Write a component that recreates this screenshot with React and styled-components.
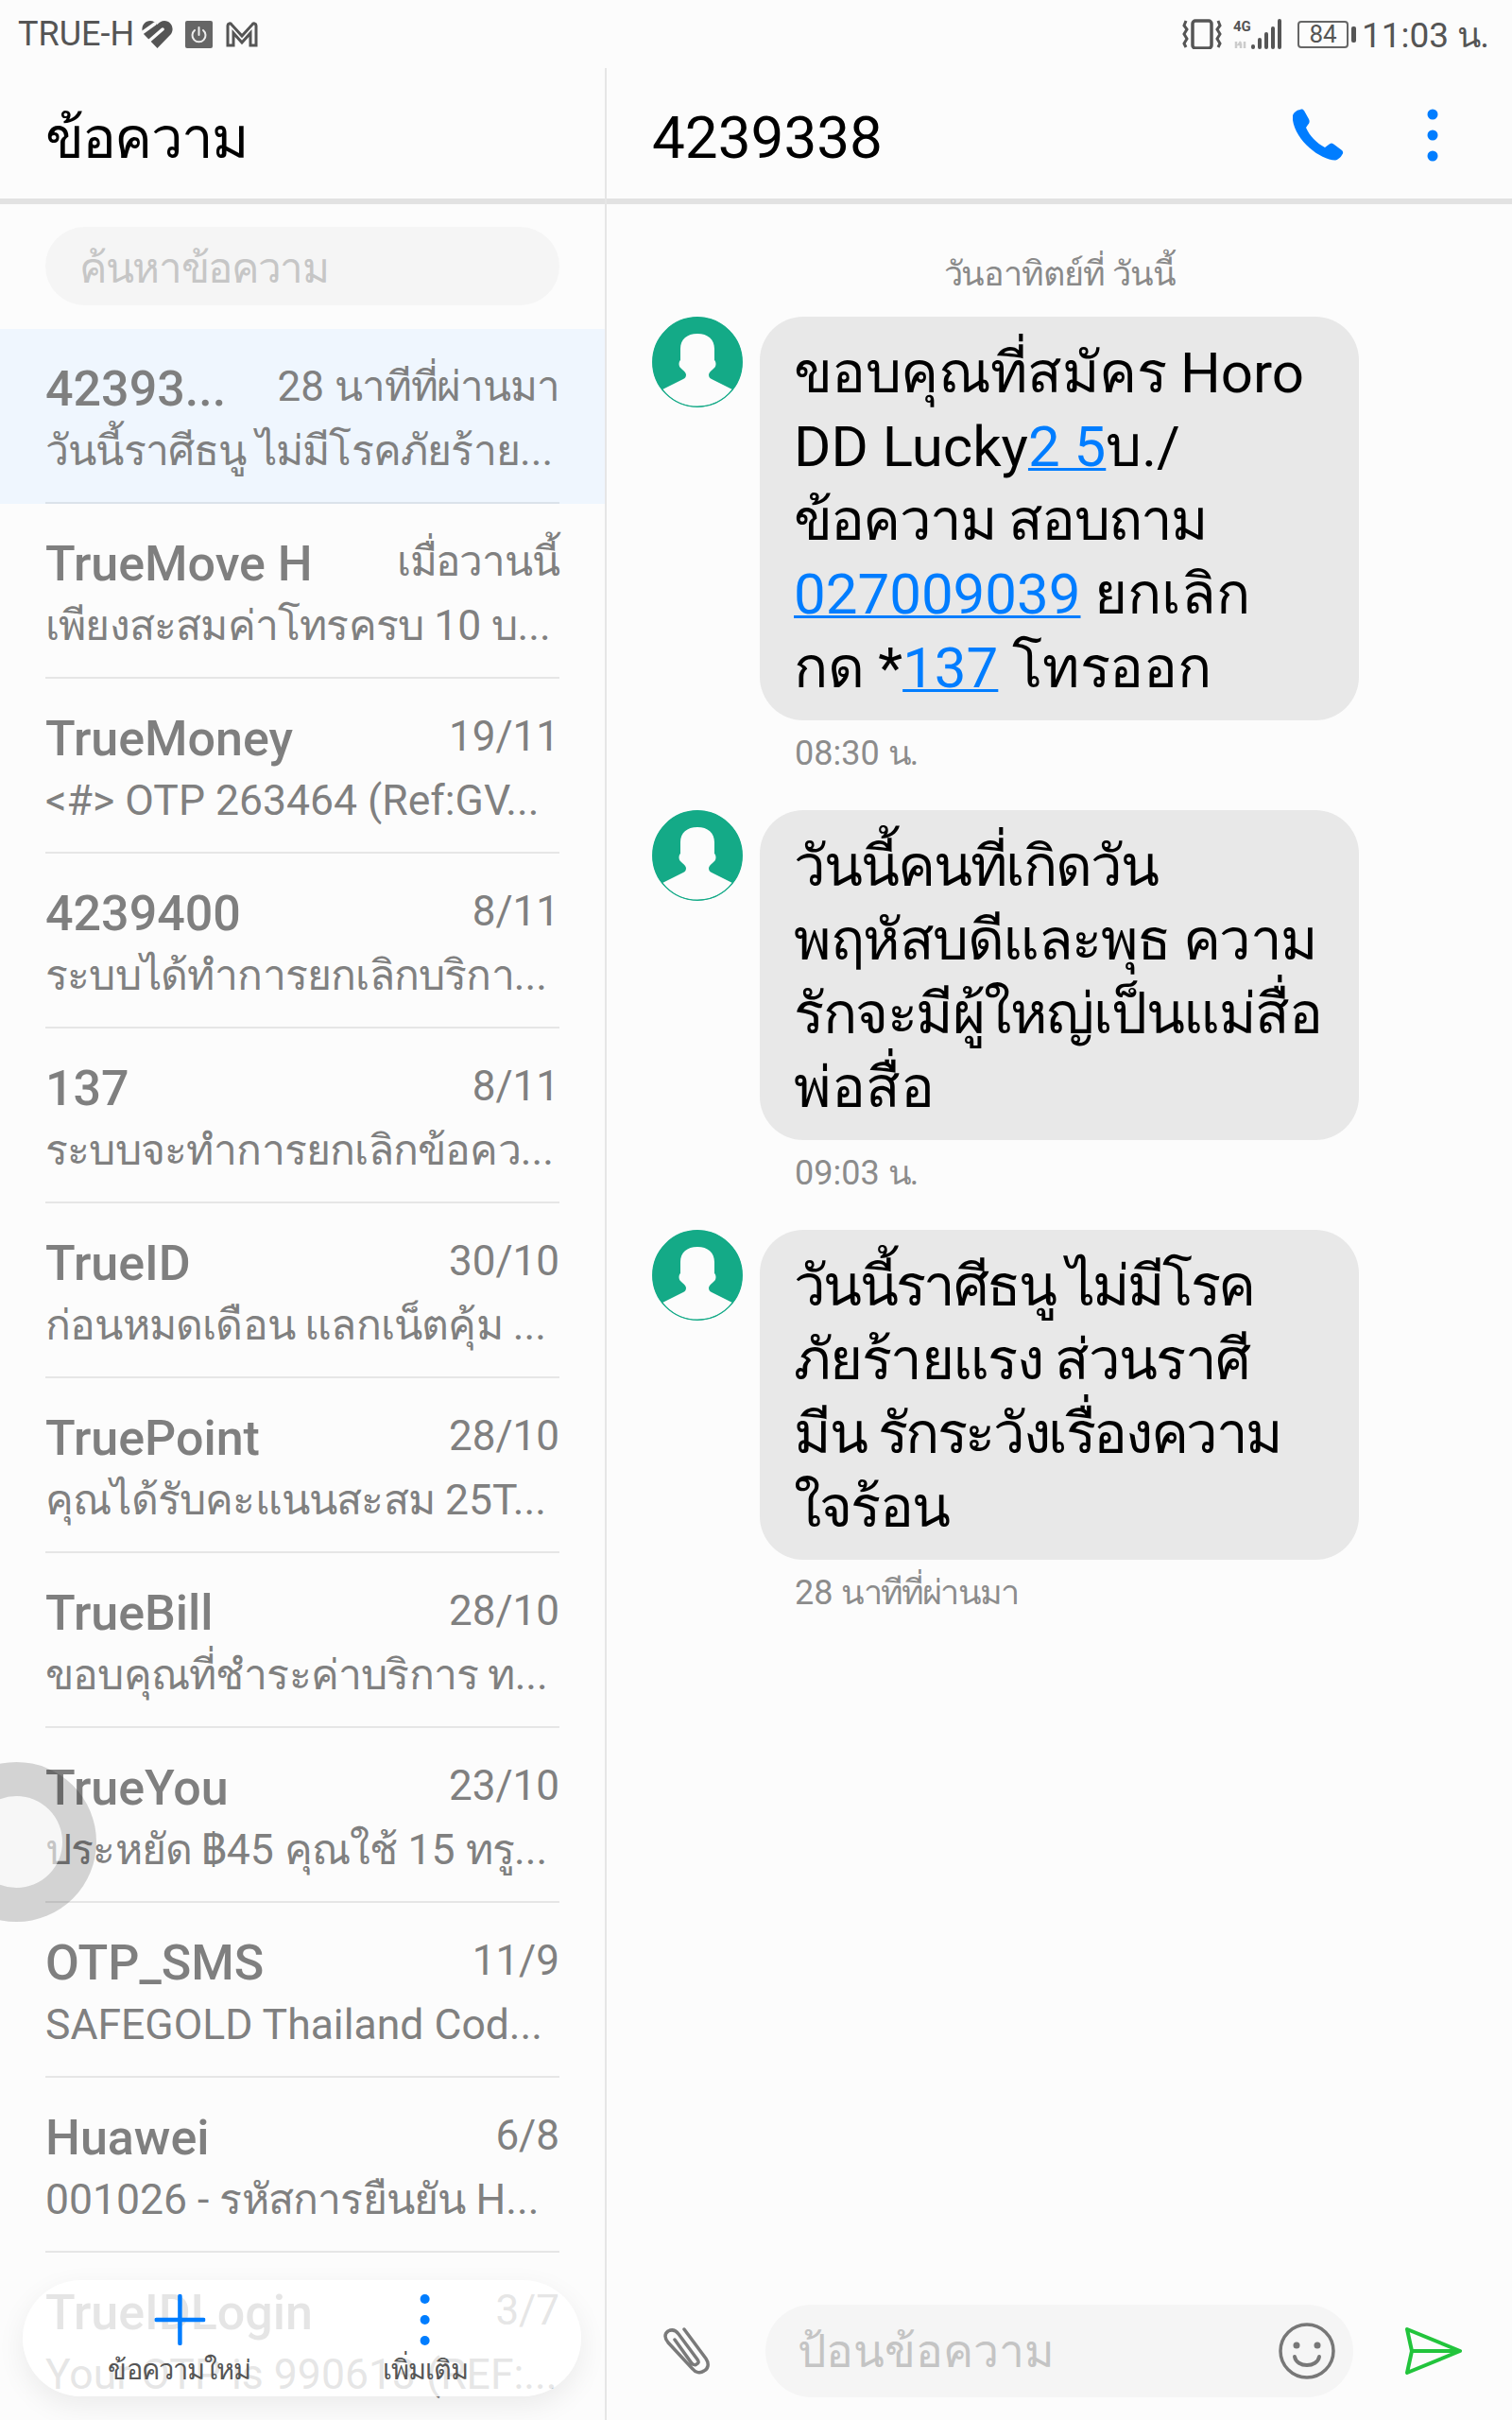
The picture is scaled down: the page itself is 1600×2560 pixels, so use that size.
import styled, { createGlobalStyle } from "styled-components";

const GlobalStyle = createGlobalStyle`
  html, body {
    margin: 0;
    padding: 0;
    background: #fcfcfc;
  }
  * {
    box-sizing: border-box;
  }
`;

const Page = styled.div`
  width: 1600px;
  height: 2560px;
  position: relative;
  overflow: hidden;
  display: flex;
  flex-direction: column;
  background: #fcfcfc;
  font-family: Roboto, "Noto Sans", sans-serif;
  --thai-track: -0.03em;
`;

/* the system Thai fallback runs wider than the phone's font */
const ThaiRun = styled.span`
  letter-spacing: var(--thai-track);
`;

const StatusBar = styled.div`
  height: 72px;
  flex: none;
  display: flex;
  align-items: center;
  justify-content: space-between;
  padding: 0 24px 0 19px;
  color: #555;
`;

const StatusGroup = styled.div`
  display: flex;
  align-items: center;
`;

const Carrier = styled.span`
  font-size: 36px;
  margin-right: 8px;
`;

const ClockText = styled.span`
  font-size: 37px;
  margin-left: 14px;
`;

const Battery = styled.div`
  width: 54px;
  height: 29px;
  border: 2px solid #666;
  border-radius: 4px;
  margin-left: 16px;
  font-size: 26px;
  line-height: 24px;
  text-align: center;
  position: relative;

  &::after {
    content: "";
    position: absolute;
    right: -10px;
    top: 4px;
    width: 5px;
    height: 17px;
    background: #555;
    border-radius: 2px;
  }
`;

const Body = styled.div`
  flex: 1;
  display: flex;
  min-height: 0;
`;

const Sidebar = styled.div`
  width: 642px;
  flex: none;
  border-right: 2px solid #e6e6e6;
  display: flex;
  flex-direction: column;
  position: relative;
  overflow: hidden;
`;

const PanelHeader = styled.div`
  height: 144px;
  flex: none;
  display: flex;
  align-items: center;
  justify-content: space-between;
  border-bottom: 6px solid #e2e2e2;
  padding: 4px 48px 0;
`;

const ThreadHeader = styled(PanelHeader)`
  padding: 4px 78px 0 48px;
`;

const PanelTitle = styled.div`
  font-size: ${(p) => p.$size || 60}px;
  color: #000;
  padding-top: 4px;
`;

const SearchWrap = styled.div`
  padding: 24px 48px 25px;
  flex: none;
`;

const SearchBox = styled.div`
  height: 83px;
  border-radius: 42px;
  background: #f5f5f5;
  color: #c6c6c6;
  font-size: 44px;
  line-height: 88px;
  padding-left: 36px;
`;

const Row = styled.div`
  height: 185px;
  flex: none;
  padding: 0 48px;
  background: ${(p) => (p.$active ? "#eff6fe" : "transparent")};
`;

const RowInner = styled.div`
  height: 100%;
  padding-top: 31px;
  border-bottom: 2px solid ${(p) => (p.$active ? "#dbe2ea" : "#e6e6e6")};
`;

const RowTop = styled.div`
  display: flex;
  align-items: flex-start;
  justify-content: space-between;
  height: 67px;
`;

const RowName = styled.span`
  font-size: 52px;
  font-weight: 500;
  line-height: 66px;
  color: #7f7f7f;
`;

const RowDate = styled.span`
  font-size: 44px;
  line-height: 60px;
  color: #808080;
  --thai-track: -0.025em;
`;

const RowPreview = styled.div`
  font-size: 44.5px;
  line-height: 62px;
  color: #808080;
  white-space: nowrap;
  --thai-track: -0.018em;
`;

const FloatBar = styled.div`
  position: absolute;
  left: 24px;
  top: 2340px;
  width: 591px;
  height: 123px;
  border-radius: 62px;
  background: rgba(255, 255, 255, 0.8);
  box-shadow: 0 10px 30px rgba(0, 0, 0, 0.07);
`;

const FloatAction = styled.div`
  position: absolute;
  top: 15px;
  left: ${(p) => p.$center - 24}px;
  transform: translateX(-50%);
  display: flex;
  flex-direction: column;
  align-items: center;
  gap: 3px;
  color: #555;
  font-size: 29px;
  white-space: nowrap;
`;

const Ball = styled.div`
  position: absolute;
  left: -67px;
  top: 1792px;
  width: 169px;
  height: 169px;
  border-radius: 50%;
  border: 36px solid rgba(0, 0, 0, 0.16);
  background: rgba(244, 244, 244, 0.6);
  background-clip: padding-box;
`;

const Thread = styled.div`
  flex: 1;
  display: flex;
  flex-direction: column;
  min-width: 0;
`;

const HeaderIcons = styled.div`
  display: flex;
  align-items: center;
  gap: 87px;
`;

const Messages = styled.div`
  flex: 1;
  padding: 48px 0 0 48px;
  display: flex;
  flex-direction: column;
`;

const DateLabel = styled.div`
  text-align: center;
  font-size: 36px;
  line-height: 46px;
  color: #8a8a8a;
  padding: 3px 48px 0 0;
  margin-bottom: 22px;
`;

const MessageRow = styled.div`
  display: flex;
  gap: 18px;
`;

const Bubble = styled.div`
  width: 634px;
  background: #e8e8e8;
  border-radius: 46px;
  padding: 21px 36px 16px;
  font-size: 60px;
  line-height: 78px;
  color: #000;
  white-space: nowrap;
`;

const BubbleLine = styled.div`
  --thai-track: ${(p) => p.$track || 0}em;
`;

const MessageLink = styled.span`
  color: #007dff;
  text-decoration: underline;
  text-decoration-thickness: 3px;
`;

const MessageTime = styled.div`
  margin-left: 151px;
  font-size: 36px;
  line-height: 46px;
  color: #8c8c8c;
  padding: 12px 0 37px;
  --thai-track: -0.05em;
`;

const Composer = styled.div`
  height: 98px;
  flex: none;
  display: flex;
  align-items: center;
  padding: 0 0 0 58px;
  margin-bottom: 24px;
`;

const InputPill = styled.div`
  width: 622px;
  height: 98px;
  border-radius: 49px;
  background: #f5f5f5;
  margin: 0 55px 0 58px;
  padding: 0 19px 0 34px;
  display: flex;
  align-items: center;
  justify-content: space-between;
  color: #c4c4c4;
  font-size: 48px;
  --thai-track: 0em;
`;

const threads = [
  { name: "42393...", date: "28 นาทีที่ผ่านมา", preview: "วันนี้ราศีธนู ไม่มีโรคภัยร้าย...", active: true },
  { name: "TrueMove H", date: "เมื่อวานนี้", preview: "เพียงสะสมค่าโทรครบ 10 บ..." },
  { name: "TrueMoney", date: "19/11", preview: "<#> OTP 263464 (Ref:GV..." },
  { name: "4239400", date: "8/11", preview: "ระบบได้ทำการยกเลิกบริกา..." },
  { name: "137", date: "8/11", preview: "ระบบจะทำการยกเลิกข้อคว..." },
  { name: "TrueID", date: "30/10", preview: "ก่อนหมดเดือน แลกเน็ตคุ้ม ..." },
  { name: "TruePoint", date: "28/10", preview: "คุณได้รับคะแนนสะสม 25T..." },
  { name: "TrueBill", date: "28/10", preview: "ขอบคุณที่ชำระค่าบริการ ท..." },
  { name: "TrueYou", date: "23/10", preview: "ประหยัด ฿45 คุณใช้ 15 ทรู..." },
  { name: "OTP_SMS", date: "11/9", preview: "SAFEGOLD Thailand Cod..." },
  { name: "Huawei", date: "6/8", preview: "001026 - รหัสการยืนยัน H..." },
  { name: "TrueIDLogin", date: "3/7", preview: "Your OTP is 990613 (REF:..." },
];

const Thai = ({ children }) =>
  children
    .split(/([\u0E00-\u0E7F]+(?:\s+[\u0E00-\u0E7F]+)*)/)
    .map((part, i) => (i % 2 ? <ThaiRun key={i}>{part}</ThaiRun> : part));

const Avatar = () => (
  <svg width="96" height="96" viewBox="0 0 96 96" style={{ flex: "none" }}>
    <circle cx="48" cy="48" r="47.5" fill="#14aa87" />
    <path
      d="M48 18C37 18 30 24 30 34V46C28 48 28 52 30 54C33 57 35 58 36 61C36 64 35 65 33 66L11 77A47 47 0 0 0 85 77L63 66C61 65 60 64 60 61C61 58 63 57 66 54C68 52 68 48 66 46V34C66 24 59 18 48 18Z"
      fill="#fcfcfc"
    />
    <circle cx="48" cy="48" r="47.2" fill="none" stroke="#14aa87" strokeWidth="1.4" />
  </svg>
);

const Message = ({ children, time }) => (
  <>
    <MessageRow>
      <Avatar />
      <Bubble>{children}</Bubble>
    </MessageRow>
    <MessageTime><Thai>{time}</Thai></MessageTime>
  </>
);

const App = () => (
  <Page>
    <GlobalStyle />
    <StatusBar>
      <StatusGroup>
        <Carrier>TRUE-H</Carrier>
        <svg width="33" height="29" viewBox="0 0 33 29">
          <path d="M16.500 29 2 14C-2 8 2 0 9 0 12 0 15 2 16.500 4 18 2 21 0 24 0 31 0 35 8 31 14Z" fill="#555" />
          <path d="M0 13 14 3M7 22 22 9" stroke="#fcfcfc" strokeWidth="3.500" strokeLinecap="round" />
        </svg>
        <svg width="29" height="29" viewBox="0 0 29 29" style={{ marginLeft: 13 }}>
          <rect width="29" height="29" rx="2" fill="#666" />
          <path d="M14.500 7v8" stroke="#eee" strokeWidth="2" strokeLinecap="round" />
          <path d="M10 10a7 7 0 1 0 9 0" stroke="#eee" strokeWidth="2" fill="none" strokeLinecap="round" />
        </svg>
        <svg width="34" height="27" viewBox="0 0 34 27" style={{ marginLeft: 14 }} fill="none" stroke="#555" strokeWidth="3">
          <path d="M2 25V4c0-2 3-3 4-1l11 12L28 3c1-2 4-1 4 1v21h-6V12l-9 10-9-10v13z" />
        </svg>
      </StatusGroup>
      <StatusGroup>
        <svg width="42" height="32" viewBox="0 0 42 32" fill="none" stroke="#555">
          <rect x="11" y="2" width="20" height="29" rx="3" strokeWidth="3.500" />
          <path d="M4 2l-2 5 3 4-3 5 3 5-3 5 2 4M38 2l2 5-3 4 3 5-3 5 3 5-2 4" strokeWidth="3" />
        </svg>
        <svg width="52" height="32" viewBox="0 0 52 32" style={{ marginLeft: 12 }}>
          <text x="0" y="13" fontSize="15" fontWeight="700" fill="#555" fontFamily="Roboto">4G</text>
          <path d="M3 31V24M8 24l-2 3h2v4M12 31v-7" stroke="#ccc" strokeWidth="2.500" fill="none" />
          <rect x="19" y="27" width="4" height="5" rx="2" fill="#555" />
          <rect x="26" y="20" width="4" height="12" rx="2" fill="#555" />
          <rect x="33" y="14" width="4" height="18" rx="2" fill="#555" />
          <rect x="40" y="8" width="4" height="24" rx="2" fill="#555" />
          <rect x="47" y="0" width="4" height="32" rx="2" fill="#555" />
        </svg>
        <Battery>84</Battery>
        <ClockText><Thai>11:03 น.</Thai></ClockText>
      </StatusGroup>
    </StatusBar>
    <Body>
      <Sidebar>
        <PanelHeader>
          <PanelTitle><Thai>ข้อความ</Thai></PanelTitle>
        </PanelHeader>
        <SearchWrap>
          <SearchBox><Thai>ค้นหาข้อความ</Thai></SearchBox>
        </SearchWrap>
        {threads.map((t) => (
          <Row key={t.name} $active={t.active}>
            <RowInner $active={t.active}>
              <RowTop>
                <RowName>{t.name}</RowName>
                <RowDate><Thai>{t.date}</Thai></RowDate>
              </RowTop>
              <RowPreview><Thai>{t.preview}</Thai></RowPreview>
            </RowInner>
          </Row>
        ))}
        <Ball />
        <FloatBar>
          <FloatAction $center={190}>
            <svg width="54" height="54" viewBox="0 0 54 54" stroke="#007dff" strokeWidth="4.500" strokeLinecap="round">
              <path d="M27 2v50M2 27h50" />
            </svg>
            <span><Thai>ข้อความใหม่</Thai></span>
          </FloatAction>
          <FloatAction $center={450}>
            <svg width="54" height="54" viewBox="0 0 54 54" fill="#007dff">
              <circle cx="27" cy="5" r="5" />
              <circle cx="27" cy="27" r="5" />
              <circle cx="27" cy="49" r="5" />
            </svg>
            <span><Thai>เพิ่มเติม</Thai></span>
          </FloatAction>
        </FloatBar>
      </Sidebar>
      <Thread>
        <ThreadHeader>
          <PanelTitle $size={62}>4239338</PanelTitle>
          <HeaderIcons>
            <svg width="56" height="56" viewBox="0 0 56 56" fill="#007dff">
              <path d="M1 7C2 4 6 1 9 1 11 0 12 1 13 2L18 11C19 13 19 15 17 17L15 20C19 29 26 36 35 41L39 38C41 36 43 36 45 38L53 44C55 46 54 48 53 49 52 51 49 54 46 54.500 30 54 4 34 1 12Z" />
            </svg>
            <svg width="12" height="56" viewBox="0 0 12 56" fill="#007dff">
              <circle cx="6" cy="6" r="5.500" />
              <circle cx="6" cy="28" r="5.500" />
              <circle cx="6" cy="50" r="5.500" />
            </svg>
          </HeaderIcons>
        </ThreadHeader>
        <Messages>
          <DateLabel><Thai>วันอาทิตย์ที่ วันนี้</Thai></DateLabel>
          <Message time="08:30 น.">
            <BubbleLine $track={-0.01}><Thai>ขอบคุณที่สมัคร Horo</Thai></BubbleLine>
            <BubbleLine>DD Lucky<MessageLink>2 5</MessageLink><Thai>บ./</Thai></BubbleLine>
            <BubbleLine $track={-0.03}><Thai>ข้อความ สอบถาม</Thai></BubbleLine>
            <BubbleLine><MessageLink>027009039</MessageLink> <Thai>ยกเลิก</Thai></BubbleLine>
            <BubbleLine $track={-0.005}><Thai>กด *</Thai><MessageLink>137</MessageLink> <Thai>โทรออก</Thai></BubbleLine>
          </Message>
          <Message time="09:03 น.">
            <BubbleLine $track={-0.035}><Thai>วันนี้คนที่เกิดวัน</Thai></BubbleLine>
            <BubbleLine $track={-0.025}><Thai>พฤหัสบดีและพุธ ความ</Thai></BubbleLine>
            <BubbleLine $track={-0.025}><Thai>รักจะมีผู้ใหญ่เป็นแม่สื่อ</Thai></BubbleLine>
            <BubbleLine><Thai>พ่อสื่อ</Thai></BubbleLine>
          </Message>
          <Message time="28 นาทีที่ผ่านมา">
            <BubbleLine $track={-0.045}><Thai>วันนี้ราศีธนู ไม่มีโรค</Thai></BubbleLine>
            <BubbleLine $track={-0.027}><Thai>ภัยร้ายแรง ส่วนราศี</Thai></BubbleLine>
            <BubbleLine $track={-0.04}><Thai>มีน รักระวังเรื่องความ</Thai></BubbleLine>
            <BubbleLine $track={-0.03}><Thai>ใจร้อน</Thai></BubbleLine>
          </Message>
        </Messages>
        <Composer>
          <svg width="52" height="50" viewBox="0 0 52 50" fill="none" stroke="#7a7a7a" strokeWidth="3.500" strokeLinecap="round">
            <path d="M24 2 47 33c4 6 2 11-2 13-4 3-9 2-12-2L7 16C3 11 3 7 7 4c4-2 8-1 11 3l20 27c2 3 1 4-1 5-1 1-3 1-5-1L14 13" />
          </svg>
          <InputPill>
            <span><Thai>ป้อนข้อความ</Thai></span>
            <svg width="60" height="60" viewBox="0 0 60 60" fill="none" stroke="#777" strokeWidth="3.500">
              <circle cx="30" cy="30" r="28" />
              <circle cx="19" cy="24" r="3.500" fill="#777" stroke="none" />
              <circle cx="41" cy="24" r="3.500" fill="#777" stroke="none" />
              <path d="M17 36c2 12 24 12 26 0" strokeWidth="4" strokeLinecap="round" />
            </svg>
          </InputPill>
          <svg width="60" height="50" viewBox="0 0 60 50" fill="none" stroke="#22c43c" strokeWidth="4" strokeLinejoin="round" strokeLinecap="round">
            <path d="M2 2 58 25 2 48 7 25zM7 25h51" />
          </svg>
        </Composer>
      </Thread>
    </Body>
  </Page>
);

export default App;
